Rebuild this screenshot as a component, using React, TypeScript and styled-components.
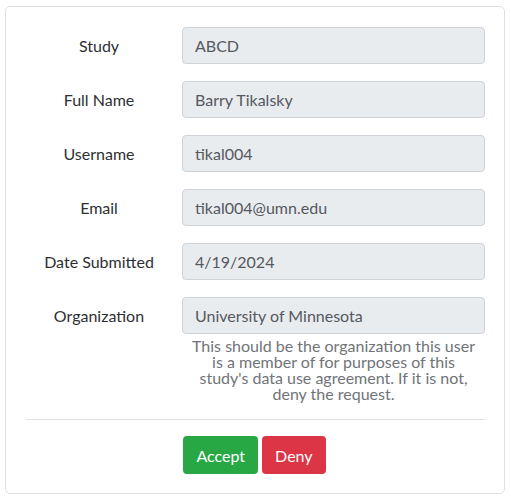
import styled, { createGlobalStyle } from "styled-components";

const GlobalStyle = createGlobalStyle`
  body {
    margin: 0;
    font-family: "Lato", "Open Sans", sans-serif;
    background: #ffffff;
  }
  * {
    box-sizing: border-box;
  }
`;

const Page = styled.div`
  padding: 6px 6px 5px 5px;
`;

const Card = styled.div`
  border: 1px solid #dddfe3;
  border-radius: 5px;
  padding: 20px 19px 19px 20px;
  background: #ffffff;
`;

const Field = styled.div`
  display: grid;
  grid-template-columns: 146px 1fr;
  column-gap: 10px;
  align-items: center;
  margin-bottom: 17px;

  &:last-of-type {
    margin-bottom: 0;
  }
`;

const Label = styled.label`
  text-align: center;
  font-size: 16px;
  color: #2e2f33;
`;

const Input = styled.input`
  height: 37px;
  width: 100%;
  padding: 0 12px;
  font-family: inherit;
  font-size: 16px;
  color: #555860;
  background: #e9ecef;
  border: 1px solid #cfd3d8;
  border-radius: 4px;
`;

const Help = styled.div`
  grid-column: 2;
  text-align: center;
  font-size: 16px;
  line-height: 16px;
  color: #707478;
  padding: 4px 6px 0;
`;

const Divider = styled.hr`
  border: none;
  border-top: 1px solid #dcdee1;
  margin: 17px 0 16px;
`;

const Actions = styled.div`
  display: flex;
  justify-content: center;
  gap: 4px;
  padding-right: 2px;
`;

const Btn = styled.button<{ $variant: "success" | "danger" }>`
  height: 38px;
  padding: 0 13px;
  font-family: inherit;
  font-size: 16px;
  color: #ffffff;
  border: none;
  border-radius: 4px;
  cursor: pointer;
  background: ${(p) => (p.$variant === "success" ? "#28a745" : "#dc3545")};
`;

const fields = [
  { label: "Study", value: "ABCD" },
  { label: "Full Name", value: "Barry Tikalsky" },
  { label: "Username", value: "tikal004" },
  { label: "Email", value: "tikal004@umn.edu" },
  { label: "Date Submitted", value: "4/19/2024" },
];

function App() {
  return (
    <Page>
      <GlobalStyle />
      <Card>
        {fields.map((f) => (
          <Field key={f.label}>
            <Label>{f.label}</Label>
            <Input value={f.value} readOnly disabled />
          </Field>
        ))}
        <Field>
          <Label>Organization</Label>
          <Input value="University of Minnesota" readOnly disabled />
          <Help>
            This should be the organization this user is a member of for
            purposes of this study's data use agreement. If it is not, deny
            the request.
          </Help>
        </Field>
        <Divider />
        <Actions>
          <Btn $variant="success">Accept</Btn>
          <Btn $variant="danger">Deny</Btn>
        </Actions>
      </Card>
    </Page>
  );
}

export default App;
